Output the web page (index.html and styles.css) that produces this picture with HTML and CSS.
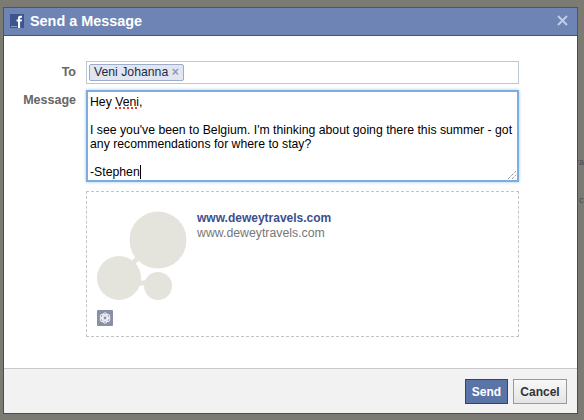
FILE: index.html

```html
<!DOCTYPE html>
<html>
<head>
  <meta charset="UTF-8">
  <title>Send a Message</title>
  <link rel="stylesheet" href="styles.css">
</head>
<body>
  <span class="behind behind-a">ra</span>
  <span class="behind behind-b">c</span>

  <div class="dialog">
    <div class="header">
      <div class="title-wrap">
        <svg class="fb-logo" width="14" height="14" viewBox="0 0 14 14">
          <rect width="14" height="14" fill="#3b5591"/>
          <rect x="1" y="12" width="6" height="1" fill="#8fa2c9"/>
          <path d="M8 14V7.5H6.6V5.6H8V4.2C8 2.6 8.9 1.8 10.4 1.8H12V3.7H11C10.3 3.7 10.1 4 10.1 4.6V5.6H12L11.7 7.5H10.1V14Z" fill="#fff"/>
        </svg>
        <span class="title">Send a Message</span>
      </div>
      <svg class="close" width="11" height="11" viewBox="0 0 11 11">
        <path d="M1 1L10 10M10 1L1 10" stroke="#c3cde2" stroke-width="2"/>
      </svg>
    </div>

    <div class="content">
      <div class="row row-to">
        <label class="field-label">To</label>
        <div class="to-box">
          <span class="token">Veni Johanna <span class="token-x">×</span></span>
        </div>
      </div>

      <div class="row row-message">
        <label class="field-label">Message</label>
        <div class="message-box">
          <p>Hey <span class="misspelled">Veni</span>,</p>
          <p class="gap">I see you've been to Belgium. I'm thinking about going there this summer - got any recommendations for where to stay?</p>
          <p class="gap"><span class="caret">-Stephen</span></p>
          <svg class="grip" width="10" height="10" viewBox="0 0 10 10">
            <path d="M1 9L9 1M5 9L9 5" stroke="#666" stroke-width="1" stroke-dasharray="1 1"/>
          </svg>
        </div>
      </div>

      <div class="attachment">
        <div class="thumb">
          <svg width="90" height="90" viewBox="0 0 90 90">
            <path d="M36 52L46 42" stroke="#e4e4dc" stroke-width="5"/>
            <path d="M38 72H52" stroke="#e4e4dc" stroke-width="5"/>
            <circle cx="61" cy="29" r="28.5" fill="#e4e4dc"/>
            <circle cx="22" cy="67" r="22" fill="#e4e4dc"/>
            <circle cx="61" cy="75" r="14" fill="#e4e4dc"/>
          </svg>
          <div class="gear-btn">
            <svg width="12" height="12" viewBox="0 0 12 12" fill="none" stroke="#eef0f5">
              <circle cx="6" cy="6" r="2" stroke-width="1.2"/>
              <ellipse cx="6" cy="6" rx="2.6" ry="5.2" stroke-width="1"/>
              <ellipse cx="6" cy="6" rx="2.6" ry="5.2" stroke-width="1" transform="rotate(60 6 6)"/>
              <ellipse cx="6" cy="6" rx="2.6" ry="5.2" stroke-width="1" transform="rotate(120 6 6)"/>
            </svg>
          </div>
        </div>
        <div class="link-info">
          <a class="link-title">www.deweytravels.com</a>
          <div class="link-url">www.deweytravels.com</div>
        </div>
      </div>
    </div>

    <div class="footer">
      <button class="btn btn-send">Send</button>
      <button class="btn btn-cancel">Cancel</button>
    </div>
  </div>
</body>
</html>
```

FILE: styles.css

```css
html, body {
  height: 100%;
}

body {
  margin: 0;
  padding: 7px 6px 7px 3px;
  box-sizing: border-box;
  background: #7b7b73;
  font-family: "Liberation Sans", Arial, sans-serif;
  font-size: 12px;
  color: #111;
  overflow: hidden;
}

.behind {
  position: absolute;
  left: 576px;
  font-size: 9px;
  color: #4c4650;
}

.behind-a {
  top: 157px;
}

.behind-b {
  top: 195px;
  left: 579px;
}

.dialog {
  height: 406px;
  display: flex;
  flex-direction: column;
  background: #fff;
  border: 1px solid #4c4c4c;
  border-top: 0;
  position: relative;
}

.header {
  height: 29px;
  flex: none;
  margin: 0 -1px;
  background: #6d84b4;
  border: 1px solid #3b5591;
  display: flex;
  align-items: center;
  justify-content: space-between;
  padding: 0 9px 2px 6px;
  box-sizing: border-box;
}

.title-wrap {
  display: flex;
  align-items: center;
  gap: 6px;
}

.title {
  font-size: 14.4px;
  font-weight: bold;
  color: #fff;
}

.content {
  flex: 1;
  padding: 25px 58px 0 14px;
}

.row {
  display: flex;
  gap: 10px;
}

.field-label {
  width: 58px;
  flex: none;
  text-align: right;
  font-size: 12.5px;
  font-weight: bold;
  color: #666;
}

.row-to .field-label {
  line-height: 23px;
}

.row-message {
  margin-top: 6px;
}

.row-message .field-label {
  line-height: 20px;
}

.to-box {
  flex: 1;
  height: 23px;
  box-sizing: border-box;
  border: 1px solid #bdc7d8;
  padding: 2px;
}

.token {
  display: inline-block;
  height: 17px;
  line-height: 15px;
  box-sizing: border-box;
  padding: 0 4px;
  font-size: 12.25px;
  background: #e2e6f0;
  border: 1px solid #9daccc;
  border-radius: 2px;
  color: #1c2a47;
}

.token-x {
  color: #8e9ab5;
  font-weight: bold;
}

.message-box {
  flex: 1;
  height: 92px;
  box-sizing: border-box;
  border: 2px solid #7dacdf;
  box-shadow: 0 0 3px #9dc3ea;
  padding: 3px 2px;
  font-size: 12.25px;
  line-height: 14px;
  color: #000;
  position: relative;
}

.message-box p {
  margin: 0;
}

.message-box .gap {
  margin-top: 14px;
}

.misspelled {
  text-decoration: underline dotted #e8412a 2px;
}

.caret {
  border-right: 1px solid #000;
}

.grip {
  position: absolute;
  right: 0;
  bottom: 0;
}

.attachment {
  margin: 9px 0 0 68px;
  height: 146px;
  box-sizing: border-box;
  border: 1px dashed #c4c4c4;
  padding: 19px 10px 0;
  display: flex;
  gap: 10px;
}

.thumb {
  width: 90px;
  flex: none;
}

.thumb svg {
  display: block;
}

.gear-btn {
  width: 16px;
  height: 16px;
  margin-top: 9px;
  border-radius: 1px;
  background: #8890a6;
  display: flex;
  align-items: center;
  justify-content: center;
}

.link-info {
  line-height: 15px;
}

.link-title {
  font-weight: bold;
  color: #3b4f8f;
}

.link-url {
  font-size: 12.3px;
  color: #777;
}

.footer {
  height: 45px;
  flex: none;
  box-sizing: border-box;
  background: #f2f2f2;
  border-top: 1px solid #c9c9c9;
  display: flex;
  justify-content: flex-end;
  align-items: center;
  gap: 5px;
  padding: 1px 10px 0 0;
}

.btn {
  height: 25px;
  box-sizing: border-box;
  padding: 0;
  font-family: inherit;
  font-size: 12px;
  font-weight: bold;
}

.btn-send {
  width: 43px;
  color: #fff;
  background: #5b74a8;
  border: 1px solid #29447e;
}

.btn-cancel {
  width: 54px;
  color: #333;
  background: linear-gradient(#f8f8f8, #e4e4e4);
  border: 1px solid #999;
}
```
